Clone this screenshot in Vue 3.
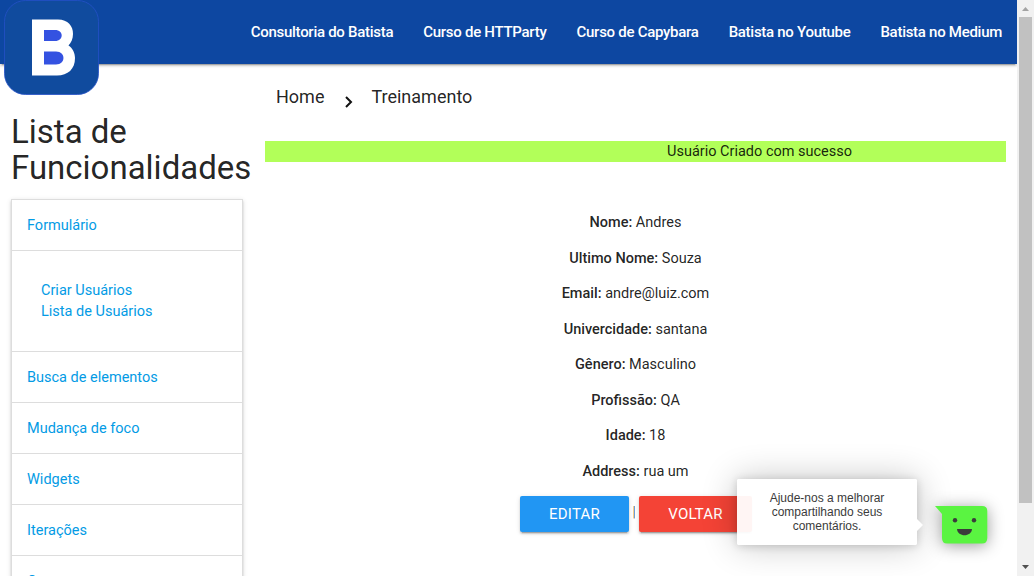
<script setup>
const navLinks = [
  'Consultoria do Batista',
  'Curso de HTTParty',
  'Curso de Capybara',
  'Batista no Youtube',
  'Batista no Medium',
]
const fields = [
  ['Nome', 'Andres'],
  ['Ultimo Nome', 'Souza'],
  ['Email', 'andre@luiz.com'],
  ['Univercidade', 'santana'],
  ['Gênero', 'Masculino'],
  ['Profissão', 'QA'],
  ['Idade', '18'],
  ['Address', 'rua um'],
]
const sections = ['Busca de elementos', 'Mudança de foco', 'Widgets', 'Iterações', 'Outros']
</script>

<template>
  <div class="window">
    <div class="page">
      <header class="navbar">
        <svg class="logo" width="96" height="96" viewBox="0 0 96 96">
          <rect x=".5" y=".5" width="94" height="94" rx="21" fill="#104b9e" stroke="#2450c8" stroke-width=".8" />
          <path fill="#fff" d="M28 19.5H54C64 19.5 69 26 69 34C69 39 67 43 64.500 45.500C68.500 48 71 53 71 58C71 69 64 75.500 53 75.500H28Z" />
          <path fill="#3452e1" d="M40 30H51C60 30 60 41 51 41H40ZM40 51.500H52C62 51.500 62 64.500 52 64.500H40Z" />
        </svg>
        <nav class="links">
          <a v-for="link in navLinks" :key="link">{{ link }}</a>
        </nav>
      </header>

      <div class="columns">
        <aside class="sidebar">
          <h1>Lista de Funcionalidades</h1>
          <ul class="menu">
            <li class="item">Formulário</li>
            <li class="submenu">
              <a>Criar Usuários</a>
              <a>Lista de Usuários</a>
            </li>
            <li v-for="section in sections" :key="section" class="item">{{ section }}</li>
          </ul>
        </aside>

        <main class="content">
          <div class="breadcrumb">
            <a>Home</a>
            <svg class="chevron" width="10" height="14" viewBox="0 0 10 14"><path d="M2 2L7 7L2 12" fill="none" stroke="#111" stroke-width="2" /></svg>
            <a>Treinamento</a>
          </div>
          <div class="notice">Usuário Criado com sucesso</div>
          <div class="details">
            <p v-for="[label, value] in fields" :key="label"><strong>{{ label }}:</strong> {{ value }}</p>
          </div>
          <div class="actions">
            <a class="btn edit">Editar</a>
            <span class="divider">|</span>
            <a class="btn back">Voltar</a>
          </div>
        </main>
      </div>
    </div>

    <div class="scrollbar">
      <svg class="arrow" width="17" height="17" viewBox="0 0 17 17"><path d="M5 11H12L8.500 7Z" fill="#a3a3a3" /></svg>
      <div class="thumb"></div>
      <svg class="arrow" width="17" height="17" viewBox="0 0 17 17"><path d="M5 6H12L8.500 10Z" fill="#505050" /></svg>
    </div>

    <div class="tooltip">Ajude-nos a melhorar compartilhando seus comentários.</div>
    <svg class="feedback" width="54" height="40" viewBox="0 0 54 40">
      <path fill="#5af441" d="M0 1H47Q52.300 1 52.300 6V33Q52.300 38.500 47 38.500H12Q7 38.500 7 33V9Z" />
      <circle cx="20" cy="15.300" r="2.200" fill="#3b3b3b" />
      <circle cx="39" cy="15.300" r="2.200" fill="#3b3b3b" />
      <path d="M22 24H37C36.500 32.300 22.500 32.300 22 24Z" fill="#3b3b3b" />
    </svg>
  </div>
</template>

<style>
html,
body {
  overflow: hidden;
}
</style>

<style scoped>
* {
  box-sizing: border-box;
}
.window {
  position: relative;
  display: flex;
  width: 1034px;
  height: 576px;
  overflow: hidden;
  background: #fff;
  color: rgba(0, 0, 0, 0.87);
  font-family: Roboto, sans-serif;
  font-size: 14.5px;
  line-height: 21px;
}
.page {
  width: 1017px;
  height: 576px;
  overflow: hidden;
}
.navbar {
  position: relative;
  display: flex;
  justify-content: flex-end;
  height: 64px;
  background: #0d47a1;
  box-shadow: 0 2px 2px 0 rgba(0, 0, 0, 0.14), 0 1px 5px 0 rgba(0, 0, 0, 0.12), 0 3px 1px -2px rgba(0, 0, 0, 0.2);
}
.logo {
  position: absolute;
  left: 4px;
  top: 0;
}
.links {
  display: flex;
}
.links a {
  padding: 0 15px;
  color: #fff;
  font-size: 15px;
  font-weight: 500;
  letter-spacing: -0.28px;
  line-height: 64px;
  white-space: nowrap;
}
.columns {
  display: flex;
}
.sidebar {
  width: 254px;
  padding-left: 11px;
}
h1 {
  margin: 50px 0 13px;
  font-size: 33px;
  font-weight: 400;
  line-height: 36px;
}
.menu {
  width: 232px;
  margin: 0;
  padding: 0;
  list-style: none;
  color: #039be5;
  border: 1px solid #ddd;
  box-shadow: 0 2px 2px 0 rgba(0, 0, 0, 0.14), 0 1px 5px 0 rgba(0, 0, 0, 0.12), 0 3px 1px -2px rgba(0, 0, 0, 0.2);
}
.item {
  height: 51px;
  padding: 0 15px;
  line-height: 52px;
  border-bottom: 1px solid #ddd;
}
.submenu {
  display: flex;
  flex-direction: column;
  height: 101px;
  padding: 29px 29px 0;
  border-bottom: 1px solid #ddd;
}
.content {
  flex: 1;
  padding: 0 11px;
}
.breadcrumb {
  display: flex;
  align-items: center;
  height: 64px;
  padding-left: 11px;
  font-size: 18px;
}
.chevron {
  margin: 12px 17px 0 20px;
}
.notice {
  height: 21px;
  margin-top: 13px;
  padding-left: 402px;
  background: #b2ff59;
}
.details {
  padding-top: 50px;
  text-align: center;
}
.details p {
  margin: 0 0 14.5px;
}
.details strong {
  font-weight: 500;
}
.actions {
  display: flex;
  padding-left: 255px;
}
.btn {
  height: 36px;
  border-radius: 2px;
  color: #fff;
  font-size: 15px;
  letter-spacing: 0.2px;
  line-height: 36px;
  text-align: center;
  text-transform: uppercase;
  box-shadow: 0 2px 2px 0 rgba(0, 0, 0, 0.14), 0 1px 5px 0 rgba(0, 0, 0, 0.12), 0 3px 1px -2px rgba(0, 0, 0, 0.2);
}
.edit {
  width: 109px;
  background: #2196f3;
}
.back {
  width: 113px;
  background: #f44336;
}
.divider {
  width: 10px;
  color: rgba(0, 0, 0, 0.87);
  font-weight: 300;
  line-height: 34px;
  text-align: center;
}
.scrollbar {
  display: flex;
  flex-direction: column;
  width: 17px;
  background: #f1f1f1;
}
.thumb {
  height: 486px;
  margin: 0 2px auto;
  background: #c1c1c1;
}
.arrow {
  display: block;
}
.tooltip {
  position: absolute;
  left: 737px;
  top: 479px;
  width: 180px;
  height: 66px;
  padding: 12px 25px;
  border-radius: 2px;
  background: rgba(255, 255, 255, 0.95);
  box-shadow: 0 0 35px rgba(0, 0, 0, 0.24), 0 1px 8px rgba(0, 0, 0, 0.16);
  color: #3b3b3b;
  font-family: "Liberation Sans", Arial, sans-serif;
  font-size: 12px;
  line-height: 14px;
  text-align: center;
}
.tooltip::after {
  content: "";
  position: absolute;
  left: 180px;
  top: 40px;
  border: 6px solid transparent;
  border-left-color: #fff;
  border-right-width: 0;
}
.feedback {
  position: absolute;
  left: 935px;
  top: 505px;
  overflow: visible;
  filter: drop-shadow(0 2px 8px rgba(0, 0, 0, 0.4));
}
</style>
